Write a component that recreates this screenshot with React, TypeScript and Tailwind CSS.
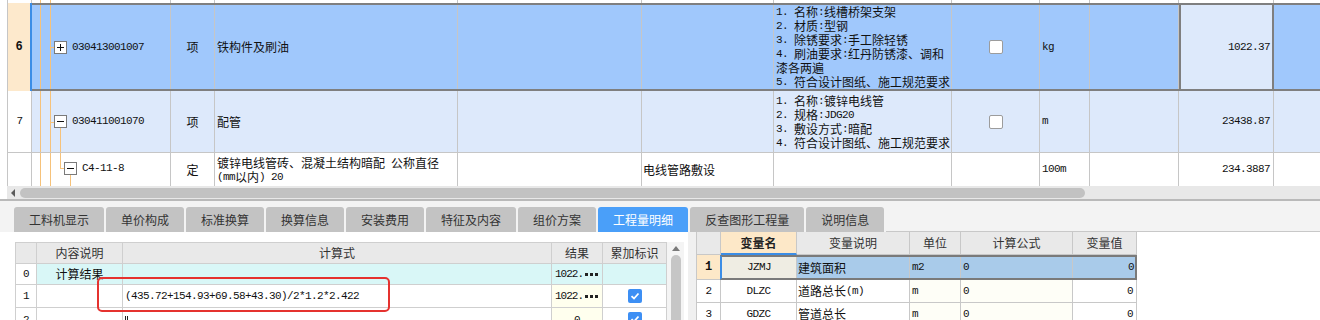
import React from "react";

function M({ t }: { t: string }) {
  const parts = t.split(/([\x20-\x7E]+)/).filter((p) => p.length > 0);
  return (
    <>
      {parts.map((p, i) =>
        /^[\x20-\x7E]+$/.test(p) ? (
          <span key={i} className="font-['Liberation_Mono',monospace] text-[11px] tracking-[-0.6px]">
            {p}
          </span>
        ) : (
          <span key={i}>{p}</span>
        )
      )}
    </>
  );
}

const W = [
  "w-[139px]",
  "w-[44px]",
  "w-[243px]",
  "w-[184px]",
  "w-[132px]",
  "w-[178px]",
  "w-[88px]",
  "w-[50px]",
  "w-[89px]",
  "w-[95px]",
];

const ORANGE = "bg-[#f6c27a]";

function VLines() {
  return (
    <>
      <div className="absolute left-[8px] top-0 bottom-0 w-px bg-[#f6c27a]" />
      <div className="absolute left-[18px] top-0 bottom-0 w-px bg-[#f6c27a]" />
    </>
  );
}

function Box({ plus }: { plus?: boolean }) {
  return (
    <div className="relative w-[13px] h-[13px] shrink-0 border border-[#7a7a7a] bg-white">
      <div className="absolute left-[2px] top-[5px] w-[7px] h-px bg-[#111]" />
      {plus && <div className="absolute left-[5px] top-[2px] w-px h-[7px] bg-[#111]" />}
    </div>
  );
}

function Check() {
  return <div className="w-[14px] h-[14px] rounded-[2px] border border-[#9c9c9c] bg-white" />;
}

function BlueCheck() {
  return (
    <div className="w-[14px] h-[14px] rounded-[2px] bg-[#3d8ff4] flex items-center justify-center">
      <svg width="10" height="10" viewBox="0 0 10 10">
        <path d="M1.5 5.2 L4 7.5 L8.5 2.5" fill="none" stroke="white" strokeWidth="1.8" />
      </svg>
    </div>
  );
}

function Line({ t }: { t: string }) {
  return (
    <div className="h-[14px] leading-[14px] whitespace-pre flex items-center">
      <M t={t} />
    </div>
  );
}

function Features({ lines }: { lines: string[] }) {
  return (
    <div className="flex flex-col pl-[2px]">
      {lines.map((l, i) => (
        <Line key={i} t={l} />
      ))}
    </div>
  );
}

function Trunc() {
  return (
    <div className="flex items-center whitespace-nowrap">
      <span className="font-['Liberation_Mono',monospace] text-[11px] tracking-[-1px]">1022.</span>
      <span className="ml-[2px] flex gap-[2px]">
        <span className="w-[3px] h-[3px] bg-[#222]" />
        <span className="w-[3px] h-[3px] bg-[#222]" />
        <span className="w-[3px] h-[3px] bg-[#222]" />
      </span>
    </div>
  );
}

const CELL = "shrink-0 h-full border-r border-[#c6c6c6]";

const tabs = [
  "工料机显示",
  "单价构成",
  "标准换算",
  "换算信息",
  "安装费用",
  "特征及内容",
  "组价方案",
  "工程量明细",
  "反查图形工程量",
  "说明信息",
];

export default function App() {
  return (
    <div className="w-[1320px] h-[320px] overflow-hidden bg-white font-['Noto_Sans_CJK_SC',sans-serif] text-[12px] text-[#111]">
      {/* Top grid */}
      <div className="ml-[7px] border-l border-[#c6c6c6]">
        {/* row 5 partial */}
        <div className="flex h-[3px]">
          <div className="w-[24px] shrink-0 border-r border-[#c6c6c6]" />
          <div className={`${W[0]} ${CELL} relative`}>
            <VLines />
          </div>
          {W.slice(1).map((w, i) => (
            <div key={i} className={`${w} ${CELL}`} />
          ))}
        </div>
        {/* row 6 selected */}
        <div className="flex h-[88px]">
          <div className="w-[22px] shrink-0 bg-[#fde9cc] flex items-center justify-center">
            <span className="font-['Liberation_Mono',monospace] text-[12px] font-bold">6</span>
          </div>
          <div className="w-[2px] shrink-0 bg-[#3b8de6]" />
          <div className="flex-1 min-w-0 flex border-y-2 border-[#7f7f7f] bg-[#a0c8fc]">
            <div className={`${W[0]} ${CELL} relative flex items-center`}>
              <VLines />
              <div className={`absolute left-[18px] top-1/2 w-[4px] h-px ${ORANGE}`} />
              <div className="ml-[22px] flex items-center gap-[5px]">
                <Box plus />
                <M t="030413001007" />
              </div>
            </div>
            <div className={`${W[1]} ${CELL} flex items-center justify-center`}>项</div>
            <div className={`${W[2]} ${CELL} flex items-center pl-[2px]`}>铁构件及刷油</div>
            <div className={`${W[3]} ${CELL}`} />
            <div className={`${W[4]} ${CELL}`} />
            <div className={`${W[5]} ${CELL} flex items-center`}>
              <Features
                lines={[
                  "1. 名称:线槽桥架支架",
                  "2. 材质:型钢",
                  "3. 除锈要求:手工除轻锈",
                  "4. 刷油要求:红丹防锈漆、调和",
                  "漆各两遍",
                  "5. 符合设计图纸、施工规范要求",
                ]}
              />
            </div>
            <div className={`${W[6]} ${CELL} flex items-center justify-center`}>
              <Check />
            </div>
            <div className={`${W[7]} ${CELL} flex items-center pl-[2px]`}>
              <M t="kg" />
            </div>
            <div className={`${W[8]} ${CELL}`} />
            <div className="w-[95px] shrink-0 h-full border-x-2 border-[#7f7f7f] bg-[#dde9fb] flex items-center justify-end pr-[2px]">
              <M t="1022.37" />
            </div>
            <div className="flex-1" />
          </div>
        </div>
        {/* row 7 */}
        <div className="flex h-[62px] border-b border-[#c6c6c6]">
          <div className="w-[24px] shrink-0 border-r border-[#c6c6c6] flex items-center justify-center">
            <M t="7" />
          </div>
          <div className="flex-1 min-w-0 flex bg-[#dde9fb]">
            <div className={`${W[0]} ${CELL} relative flex items-center`}>
              <VLines />
              <div className={`absolute left-[18px] top-1/2 w-[4px] h-px ${ORANGE}`} />
              <div className={`absolute left-[28px] top-[37px] bottom-0 w-px ${ORANGE}`} />
              <div className="ml-[22px] flex items-center gap-[5px]">
                <Box />
                <M t="030411001070" />
              </div>
            </div>
            <div className={`${W[1]} ${CELL} flex items-center justify-center`}>项</div>
            <div className={`${W[2]} ${CELL} flex items-center pl-[2px]`}>配管</div>
            <div className={`${W[3]} ${CELL}`} />
            <div className={`${W[4]} ${CELL}`} />
            <div className={`${W[5]} ${CELL} flex items-center`}>
              <Features
                lines={[
                  "1. 名称:镀锌电线管",
                  "2. 规格:JDG20",
                  "3. 敷设方式:暗配",
                  "4. 符合设计图纸、施工规范要求",
                ]}
              />
            </div>
            <div className={`${W[6]} ${CELL} flex items-center justify-center`}>
              <Check />
            </div>
            <div className={`${W[7]} ${CELL} flex items-center pl-[2px]`}>
              <M t="m" />
            </div>
            <div className={`${W[8]} ${CELL}`} />
            <div className={`${W[9]} ${CELL} flex items-center justify-end pr-[3px]`}>
              <M t="23438.87" />
            </div>
            <div className="flex-1" />
          </div>
        </div>
        {/* row 8 */}
        <div className="flex h-[33px]">
          <div className="w-[24px] shrink-0 border-r border-[#c6c6c6]" />
          <div className="flex-1 min-w-0 flex bg-white">
            <div className={`${W[0]} ${CELL} relative flex items-center`}>
              <VLines />
              <div className={`absolute left-[28px] top-0 h-[15px] w-px ${ORANGE}`} />
              <div className={`absolute left-[28px] top-[15px] w-[4px] h-px ${ORANGE}`} />
              <div className={`absolute left-[38px] top-[22px] bottom-0 w-px ${ORANGE}`} />
              <div className="ml-[32px] flex items-center gap-[5px] -mt-[2px]">
                <Box />
                <M t="C4-11-8" />
              </div>
            </div>
            <div className={`${W[1]} ${CELL} flex items-center justify-center`}>定</div>
            <div className={`${W[2]} ${CELL} flex flex-col justify-center pl-[2px]`}>
              <Line t="镀锌电线管砖、混凝土结构暗配 公称直径" />
              <Line t="(mm以内) 20" />
            </div>
            <div className={`${W[3]} ${CELL}`} />
            <div className={`${W[4]} ${CELL} flex items-center pl-[1px]`}>电线管路敷设</div>
            <div className={`${W[5]} ${CELL}`} />
            <div className={`${W[6]} ${CELL}`} />
            <div className={`${W[7]} ${CELL} flex items-center pl-[2px]`}>
              <M t="100m" />
            </div>
            <div className={`${W[8]} ${CELL}`} />
            <div className={`${W[9]} ${CELL} flex items-center justify-end pr-[3px]`}>
              <M t="234.3887" />
            </div>
            <div className="flex-1" />
          </div>
        </div>
      </div>

      {/* horizontal scrollbar */}
      <div className="ml-[7px] h-[13px] bg-[#e8e8e8] flex items-center">
        <div className="ml-[4px] w-0 h-0 border-y-[4px] border-y-transparent border-r-[4px] border-r-[#5a5a5a]" />
        <div className="ml-[5px] w-[1065px] h-[10px] rounded-full bg-[#c2c2c2]" />
      </div>
      <div className="h-[2px] bg-[#b9b9b9]" />

      {/* bottom section */}
      <div className="bg-[#f3f3f3] pt-[6px]">
        <div className="flex h-[25px] pl-[14px] gap-[2px]">
          {tabs.map((t) => (
            <div
              key={t}
              className={
                t === "工程量明细"
                  ? "px-[15px] h-full flex items-center rounded-t-[3px] bg-[#4a9ff9] text-white"
                  : "px-[15px] h-full flex items-center rounded-t-[3px] bg-[#c3c3c3] text-[#333]"
              }
            >
              {t}
            </div>
          ))}
          <div className="flex-1 border-b border-[#c8c8c8]" />
        </div>

        <div className="flex h-[88px]">
          {/* left panel */}
          <div className="w-[688px] shrink-0 bg-white relative pt-[10px] pl-[15px] flex items-start">
            <div className="border-l border-t border-[#cfcfcf] text-[#333]">
              {/* header */}
              <div className="flex h-[21px]">
                <div className="w-[21px] border-r border-b border-[#cfcfcf] bg-[#e9e9e9]" />
                <div className="w-[86px] border-r border-b border-[#cfcfcf] bg-[#e9e9e9] flex items-center justify-center">内容说明</div>
                <div className="w-[429px] border-r border-b border-[#cfcfcf] bg-[#e9e9e9] flex items-center justify-center">计算式</div>
                <div className="w-[51px] border-r border-b border-[#cfcfcf] bg-[#e9e9e9] flex items-center justify-center">结果</div>
                <div className="w-[64px] border-r border-b border-[#cfcfcf] bg-[#e9e9e9] flex items-center justify-center">累加标识</div>
              </div>
              {/* row 0 */}
              <div className="flex h-[21px]">
                <div className="w-[21px] border-r border-b border-[#cfcfcf] flex items-center justify-center text-[#111]">
                  <M t="0" />
                </div>
                <div className="w-[86px] border-r border-b border-[#cfcfcf] bg-[#d9f7f7] flex items-center justify-center text-[#111]">计算结果</div>
                <div className="w-[429px] border-r border-b border-[#cfcfcf] bg-[#d9f7f7]" />
                <div className="w-[51px] border-r border-b border-[#cfcfcf] bg-[#d9f7f7] flex items-center pl-[3px] text-[#111] overflow-hidden">
                  <Trunc />
                </div>
                <div className="w-[64px] border-r border-b border-[#cfcfcf] bg-[#d9f7f7]" />
              </div>
              {/* row 1 */}
              <div className="flex h-[23px]">
                <div className="w-[21px] border-r border-b border-[#cfcfcf] flex items-center justify-center text-[#111]">
                  <M t="1" />
                </div>
                <div className="w-[86px] border-r border-b border-[#cfcfcf]" />
                <div className="w-[429px] border-r border-b border-[#cfcfcf] flex items-center pl-[2px] text-[#111] whitespace-pre">
                  <M t="(435.72+154.93+69.58+43.30)/2*1.2*2.422" />
                </div>
                <div className="w-[51px] border-r border-b border-[#cfcfcf] bg-[#ffffee] flex items-center pl-[3px] text-[#111] overflow-hidden">
                  <Trunc />
                </div>
                <div className="w-[64px] border-r border-b border-[#cfcfcf] flex items-center justify-center">
                  <BlueCheck />
                </div>
              </div>
              {/* row 2 */}
              <div className="flex h-[22px]">
                <div className="w-[21px] border-r border-b border-[#cfcfcf] flex items-start pt-[4px] justify-center text-[#111]">
                  <M t="2" />
                </div>
                <div className="w-[86px] border-r border-b border-[#cfcfcf]" />
                <div className="w-[429px] border-r border-b border-[#cfcfcf] flex items-center pl-[2px]">
                  <div className="w-[3px] h-[9px] border-x border-[#222] mt-[4px]" />
                </div>
                <div className="w-[51px] border-r border-b border-[#cfcfcf] bg-[#ffffee] flex items-start pt-[4px] justify-center text-[#111]">
                  <M t="0" />
                </div>
                <div className="w-[64px] border-r border-b border-[#cfcfcf] flex items-center justify-center">
                  <BlueCheck />
                </div>
              </div>
            </div>
            {/* vertical scrollbar */}
            <div className="w-[17px] h-full bg-[#f4f4f4] flex flex-col items-center">
              <div className="mt-[4px] w-0 h-0 border-x-[4px] border-x-transparent border-b-[5px] border-b-[#7a7a7a]" />
              <div className="mt-[4px] w-[10px] flex-1 rounded-t-full bg-[#c6c6c6]" />
            </div>
            {/* red annotation box */}
            <div className="absolute left-[97px] top-[45px] w-[293px] h-[35px] border-2 border-[#e5322f] rounded-[5px]" />
          </div>

          {/* splitter */}
          <div className="w-[8px] shrink-0 bg-[#f0f0f0]" />

          {/* right panel */}
          <div className="flex-1 bg-white">
            <div className="w-[441px] border-l border-[#c8c8c8] text-[#333]">
              {/* header */}
              <div className="flex h-[23px]">
                <div className="w-[24px] border-r border-b border-[#c8c8c8] bg-[#e9e9e9]" />
                <div className="w-[76px] border-r border-[#c8c8c8] border-b-2 border-b-[#3b8de6] bg-[#fde8c8] flex items-center justify-center font-bold text-[#222]">变量名</div>
                <div className="w-[113px] border-r border-b border-[#c8c8c8] bg-[#e9e9e9] flex items-center justify-center">变量说明</div>
                <div className="w-[51px] border-r border-b border-[#c8c8c8] bg-[#e9e9e9] flex items-center justify-center">单位</div>
                <div className="w-[112px] border-r border-b border-[#c8c8c8] bg-[#e9e9e9] flex items-center justify-center">计算公式</div>
                <div className="w-[64px] border-r border-b border-[#c8c8c8] bg-[#e9e9e9] flex items-center justify-center">变量值</div>
              </div>
              {/* row 1 selected */}
              <div className="flex h-[25px] text-[#111]">
                <div className="w-[23px] border-b border-[#c8c8c8] bg-[#fde8c8] flex items-center justify-center">
                  <span className="font-['Liberation_Mono',monospace] text-[12px] font-bold">1</span>
                </div>
                <div className="flex border-y-2 border-r-2 border-[#7a7a7a] border-l-2 border-l-[#3b8de6]">
                  <div className="w-[75px] border-r border-[#c8c8c8] bg-[#efede3] flex items-center justify-center">
                    <M t="JZMJ" />
                  </div>
                  <div className="w-[113px] border-r border-[#c8c8c8] bg-[#a9cbea] flex items-center pl-[1px]">建筑面积</div>
                  <div className="w-[51px] border-r border-[#c8c8c8] bg-[#a9cbea] flex items-center pl-[2px]">
                    <M t="m2" />
                  </div>
                  <div className="w-[112px] border-r border-[#c8c8c8] bg-[#a9cbea] flex items-center pl-[2px]">
                    <M t="0" />
                  </div>
                  <div className="w-[62px] bg-[#a9cbea] flex items-center justify-end pr-[1px]">
                    <M t="0" />
                  </div>
                </div>
              </div>
              {[
                ["2", "DLZC", "道路总长(m)"],
                ["3", "GDZC", "管道总长"],
              ].map(([n, code, desc]) => (
                <div key={n} className="flex h-[23px] text-[#111]">
                  <div className="w-[24px] border-r border-b border-[#c8c8c8] flex items-center justify-center">
                    <M t={n} />
                  </div>
                  <div className="w-[76px] border-r border-b border-[#c8c8c8] flex items-center justify-center">
                    <M t={code} />
                  </div>
                  <div className="w-[113px] border-r border-b border-[#c8c8c8] flex items-center pl-[1px] whitespace-pre">
                    <M t={desc} />
                  </div>
                  <div className="w-[51px] border-r border-b border-[#c8c8c8] bg-[#fefef7] flex items-center pl-[2px]">
                    <M t="m" />
                  </div>
                  <div className="w-[112px] border-r border-b border-[#c8c8c8] bg-[#fefef7] flex items-center pl-[2px]">
                    <M t="0" />
                  </div>
                  <div className="w-[64px] border-r border-b border-[#c8c8c8] flex items-center justify-end pr-[3px]">
                    <M t="0" />
                  </div>
                </div>
              ))}
            </div>
          </div>
        </div>
      </div>
    </div>
  );
}
